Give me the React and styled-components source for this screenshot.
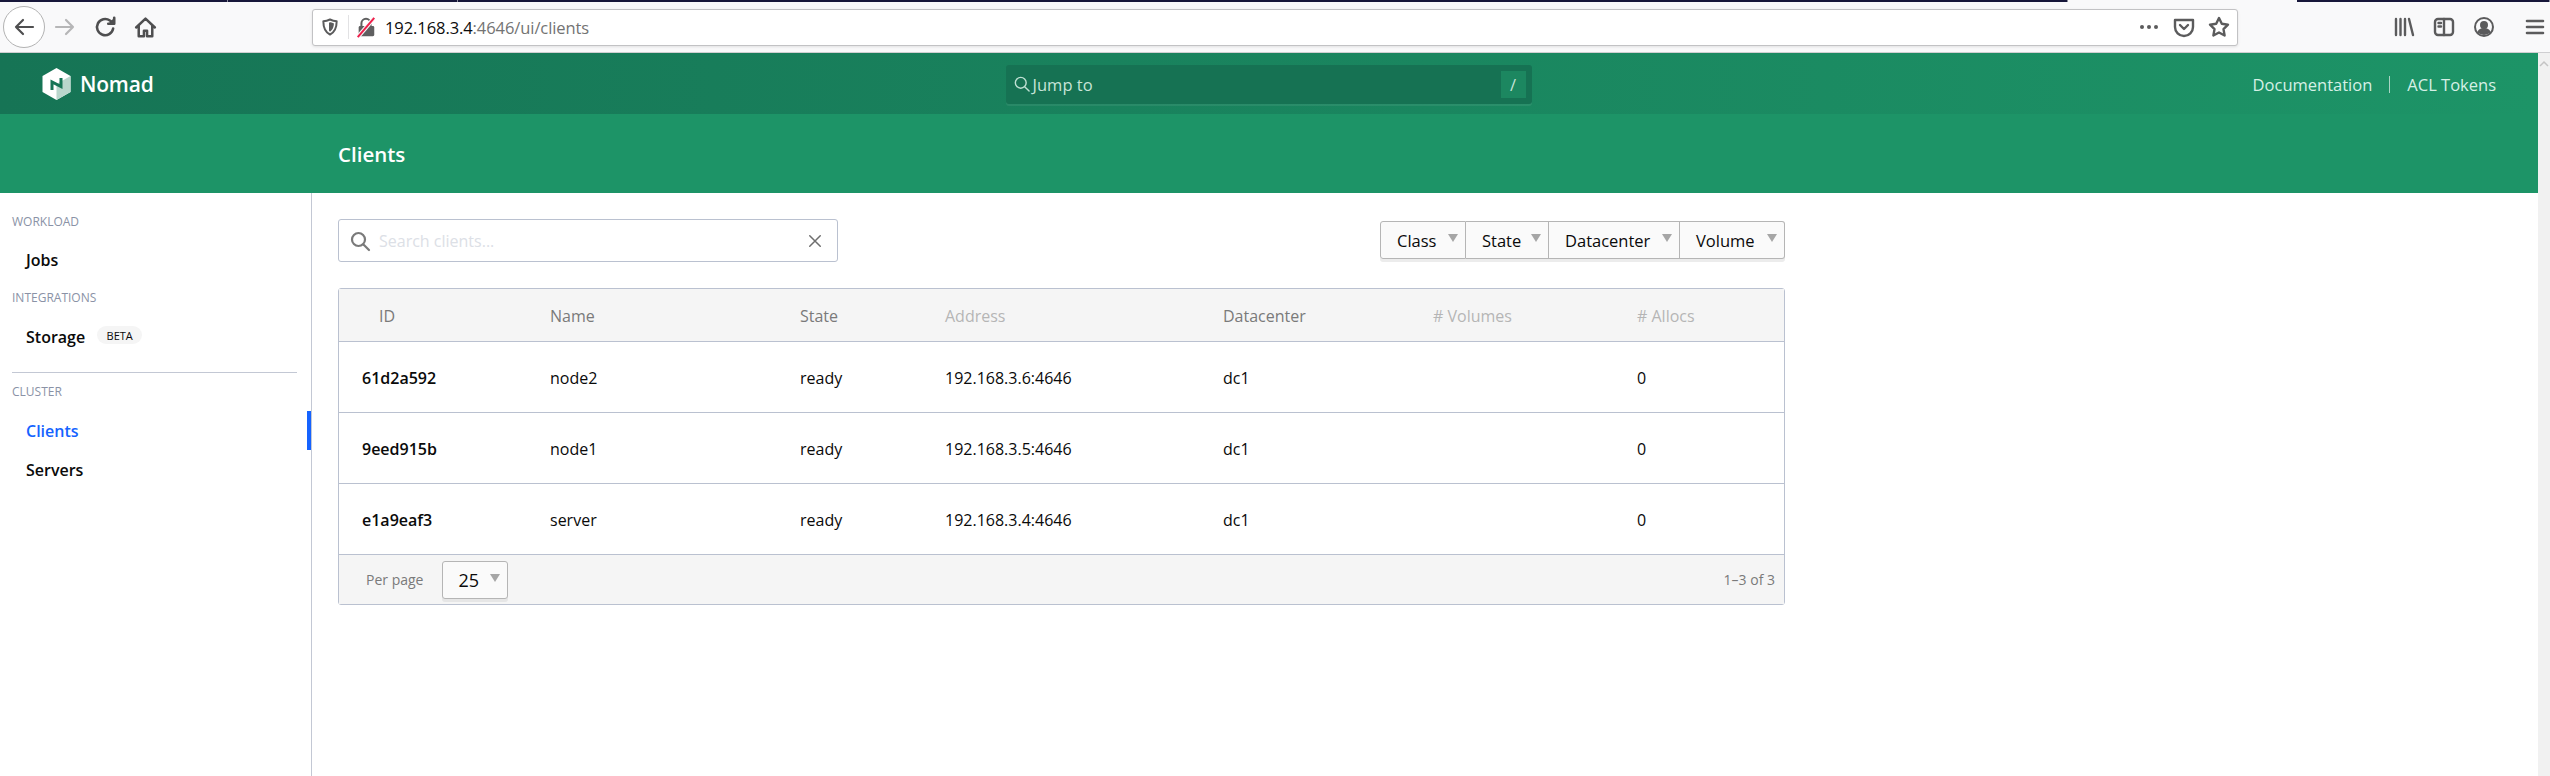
import styled, { createGlobalStyle } from 'styled-components';

const GlobalStyle = createGlobalStyle`
  html, body {
    margin: 0;
    height: 100%;
    overflow: hidden;
    background: #fff;
  }
  * {
    box-sizing: border-box;
  }
`;

const FONT = `"Open Sans", "Noto Sans", sans-serif`;

const COLUMNS = [
  { label: 'ID', width: 189, indent: 40 },
  { label: 'Name', width: 250 },
  { label: 'State', width: 145 },
  { label: 'Address', width: 278, muted: true },
  { label: 'Datacenter', width: 210 },
  { label: '# Volumes', width: 204, muted: true },
  { label: '# Allocs', width: 169, muted: true },
];

const CLIENTS = [
  { id: '61d2a592', name: 'node2', address: '192.168.3.6:4646' },
  { id: '9eed915b', name: 'node1', address: '192.168.3.5:4646' },
  { id: 'e1a9eaf3', name: 'server', address: '192.168.3.4:4646' },
];

const FILTERS = [
  { label: 'Class', width: 86 },
  { label: 'State', width: 83 },
  { label: 'Datacenter', width: 131 },
  { label: 'Volume', width: 105 },
];

const gridTemplate = COLUMNS.map((c) => `${c.width}px`).join(' ');

const Icon = ({ size = 24, w = 2, color = '#4f4f50', children }) => (
  <svg width={size} height={size} viewBox="0 0 24 24" fill="none" stroke={color} strokeWidth={w} strokeLinecap="round" strokeLinejoin="round">
    {children}
  </svg>
);

const NomadLogo = () => (
  <svg width="29" height="32" viewBox="0 0 28 32">
    <path d="M14 0 28 8v16l-14 8-14-8V8z" fill="#fff" />
    <path d="M14 16 28 8v16l-14 8z" fill="#b9d6cc" />
    <path d="M9.500 22v-8l9 4.500V10" fill="none" stroke="#167455" strokeWidth="3" />
  </svg>
);

const App = () => (
  <Page>
    <GlobalStyle />
    <TopStrip>
      <StripSegment $width={228} />
      <StripSegment $width={230} />
      <StripSegment $width={1610} />
      <StripGap />
      <StripSegment $width={253} />
    </TopStrip>
    <Toolbar>
      <BackButton>
        <Icon size={24} w={2.2}><path d="M21 12H4M11 5l-7 7 7 7" /></Icon>
      </BackButton>
      <ToolButton>
        <Icon size={24} w={2.2} color="#b6b6b7"><path d="M3 12h17M13 5l7 7-7 7" /></Icon>
      </ToolButton>
      <ToolButton>
        <Icon size={26} w={2.4}><path d="M19.500 13.500A7.500 7.500 0 1 1 16.500 6L20 8.500" /><path d="M20.500 3.500v5.500h-5.500" fill="#4f4f50" /></Icon>
      </ToolButton>
      <ToolButton>
        <Icon size={25} w={2.4}><path d="M3 12 12 3.500 21 12M5.500 10v10.500h5v-5.500h3v5.500h5V10" /></Icon>
      </ToolButton>
      <UrlBar>
        <UrlIcon>
          <Icon size={20} w={2.4} color="#5b5b5c"><path d="M12 3c3 1.500 5.500 2 8 2 0 8-2 13-8 16C6 18 4 13 4 5c2.500 0 5-.5 8-2z" /><path d="M12 7.500c1 .5 2 .7 3.500.8-.2 3.500-1.200 6-3.500 7.700z" fill="#5b5b5c" /></Icon>
        </UrlIcon>
        <UrlDivider />
        <UrlIcon>
          <svg width="24" height="24" viewBox="0 0 24 24">
            <path d="M7 11V8a5 5 0 0 1 10 0v3" fill="none" stroke="#5f5f60" strokeWidth="2.200" />
            <rect x="4" y="11" width="17" height="11" rx="1.500" fill="#5f5f60" />
            <path d="M3 23 21 2" stroke="#f9f9fa" strokeWidth="4.500" />
            <path d="M3 23 21 2" stroke="#ee1f4a" strokeWidth="2.200" />
          </svg>
        </UrlIcon>
        <UrlText>192.168.3.4<UrlMuted>:4646/ui/clients</UrlMuted></UrlText>
        <UrlActions>
          <UrlAction>
            <Icon size={24} w={0} color="#5b5b5c"><circle cx="5" cy="12" r="2" fill="#5b5b5c" /><circle cx="12" cy="12" r="2" fill="#5b5b5c" /><circle cx="19" cy="12" r="2" fill="#5b5b5c" /></Icon>
          </UrlAction>
          <UrlAction>
            <Icon size={24} w={2.4} color="#5b5b5c"><path d="M3 5h18v7a9 9 0 0 1-18 0z" /><path d="m8 10 4 4 4-4" /></Icon>
          </UrlAction>
          <UrlAction>
            <Icon size={24} w={2.4} color="#5b5b5c"><path d="m12 3 2.800 5.800 6.200.9-4.500 4.400 1.100 6.400L12 17.500 6.400 20.500l1.100-6.400L3 9.700l6.200-.9z" /></Icon>
          </UrlAction>
        </UrlActions>
      </UrlBar>
      <ToolButton $first>
        <Icon size={24} w={2.4} color="#5b5b5c"><path d="M4 4v16M8.500 4v16M13 4v16M17 4l4 16" /></Icon>
      </ToolButton>
      <ToolButton>
        <Icon size={24} w={2.4} color="#5b5b5c"><rect x="3" y="4" width="18" height="16" rx="3" /><path d="M12 4v16M6.500 8h2.500M6.500 11.500h2.500" /></Icon>
      </ToolButton>
      <ToolButton>
        <Icon size={24} w={2} color="#5b5b5c"><circle cx="12" cy="12" r="9" /><circle cx="12" cy="10" r="3" fill="#5b5b5c" /><path d="M6.500 17c1-2.500 3-3 5.500-3s4.500.5 5.500 3c-3 2.500-8 2.500-11 0z" fill="#5b5b5c" /></Icon>
      </ToolButton>
      <ToolDivider />
      <MenuButton>
        <Icon size={24} w={2.6} color="#5b5b5c"><path d="M4 6h16M4 12h16M4 18h16" /></Icon>
      </MenuButton>
    </Toolbar>
    <Viewport>
      <Content>
        <NavBar>
          <Brand>
            <NomadLogo />
            <BrandName>Nomad</BrandName>
          </Brand>
          <JumpBox>
            <JumpLabel>
              <Icon size={20} w={1.7} color="#bfe0d3"><circle cx="10.500" cy="10.500" r="6.500" /><path d="m15.500 15.500 5 5" /></Icon>
              Jump to
            </JumpLabel>
            <JumpKey>/</JumpKey>
          </JumpBox>
          <NavLinks>
            <NavLink>Documentation</NavLink>
            <NavSeparator />
            <NavLink>ACL Tokens</NavLink>
          </NavLinks>
        </NavBar>
        <SubNav>Clients</SubNav>
        <Body>
          <Sidebar>
            <MenuLabel>WORKLOAD</MenuLabel>
            <MenuItem>Jobs</MenuItem>
            <MenuLabel $top={11}>INTEGRATIONS</MenuLabel>
            <MenuItem $top={11}>
              Storage <BetaPill>BETA</BetaPill>
            </MenuItem>
            <MenuDivider />
            <MenuLabel $bottom={11}>CLUSTER</MenuLabel>
            <MenuItem $active>Clients</MenuItem>
            <MenuItem>Servers</MenuItem>
          </Sidebar>
          <Main>
            <Controls>
              <SearchBox>
                <Icon size={24} w={2.2} color="#7a7a7a"><circle cx="10.500" cy="10.500" r="6.500" /><path d="m15.500 15.500 5.500 5.500" /></Icon>
                <SearchPlaceholder>Search clients...</SearchPlaceholder>
                <Icon size={18} w={2} color="#6e6e6e"><path d="M5 5l14 14M19 5 5 19" /></Icon>
              </SearchBox>
              <FilterGroup>
                {FILTERS.map((f) => (
                  <FilterButton key={f.label} $width={f.width}>
                    {f.label}
                    <Caret />
                  </FilterButton>
                ))}
              </FilterGroup>
            </Controls>
            <Table>
              <HeaderRow>
                {COLUMNS.map((c) => (
                  <HeaderCell key={c.label} $muted={c.muted} $indent={c.indent}>{c.label}</HeaderCell>
                ))}
              </HeaderRow>
              {CLIENTS.map((client) => (
                <Row key={client.id}>
                  <IdCell>{client.id}</IdCell>
                  <Cell>{client.name}</Cell>
                  <Cell>ready</Cell>
                  <Cell>{client.address}</Cell>
                  <Cell>dc1</Cell>
                  <Cell />
                  <Cell>0</Cell>
                </Row>
              ))}
              <Footer>
                <PerPage>
                  Per page
                  <PageSelect>25<Caret /></PageSelect>
                </PerPage>
                <PageCount>1–3 of 3</PageCount>
              </Footer>
            </Table>
          </Main>
        </Body>
      </Content>
      <Scrollbar>
        <svg width="12" height="10" viewBox="0 0 12 10" fill="none" stroke="#c4c4c4" strokeWidth="1.500"><path d="m2 7 4-4 4 4" /></svg>
      </Scrollbar>
    </Viewport>
  </Page>
);

const Page = styled.div`
  display: flex;
  flex-direction: column;
  height: 776px;
  overflow: hidden;
  font-family: ${FONT};
  color: #0a0a0a;
`;

const TopStrip = styled.div`
  display: flex;
  height: 2px;
  background: #f9f9fa;
`;

const StripSegment = styled.div`
  width: ${({ $width }) => $width}px;
  background: #17173a;
  border-right: 1px solid #8d8d9c;
`;

const StripGap = styled.div`
  width: 229px;
`;

const Toolbar = styled.div`
  display: flex;
  align-items: center;
  height: 51px;
  padding-left: 3px;
  background: #f9f9fa;
  border-bottom: 1px solid #cfcfd1;
`;

const ToolButton = styled.div`
  display: flex;
  align-items: center;
  justify-content: center;
  flex: none;
  width: 40px;
  height: 40px;
  margin-left: ${({ $first }) => ($first ? '146px' : '0')};
`;

const BackButton = styled(ToolButton)`
  width: 42px;
  height: 42px;
  border: 1px solid #b3b3b3;
  border-radius: 50%;
  background: #fff;
`;

const MenuButton = styled(ToolButton)`
  margin-left: 7px;
`;

const ToolDivider = styled.div`
  width: 1px;
  height: 42px;
  margin-left: 4px;
  background: #d8d8da;
`;

const UrlBar = styled.div`
  display: flex;
  align-items: center;
  flex: none;
  width: 1926px;
  height: 37px;
  margin-left: 147px;
  padding-left: 6px;
  background: #fff;
  border: 1px solid #c2c2c4;
  border-radius: 3px;
  box-shadow: 0 1px 3px rgba(0, 0, 0, 0.1);
`;

const UrlIcon = styled.div`
  display: flex;
  align-items: center;
  justify-content: center;
  width: 22px;
  flex: none;
`;

const UrlDivider = styled.div`
  width: 1px;
  height: 24px;
  margin: 0 6px 0 7px;
  background: #e2e2e4;
`;

const UrlText = styled.div`
  margin-left: 8px;
  font-size: 16.5px;
  letter-spacing: -0.08px;
  color: #0c0c0d;
`;

const UrlMuted = styled.span`
  color: #737373;
`;

const UrlActions = styled.div`
  display: flex;
  align-items: center;
  gap: 10px;
  margin-left: auto;
  padding-right: 6px;
`;

const UrlAction = styled.div`
  display: flex;
  width: 25px;
  justify-content: center;
`;

const Viewport = styled.div`
  display: flex;
  flex: 1;
  min-height: 0;
`;

const Content = styled.div`
  display: flex;
  flex-direction: column;
  flex: 1;
  min-width: 0;
`;

const Scrollbar = styled.div`
  flex: none;
  width: 12px;
  padding-top: 6px;
  background: #f1f1f1;
  line-height: 0;
`;

const NavBar = styled.div`
  display: flex;
  align-items: center;
  flex: none;
  height: 61px;
  padding: 1px 42px 0;
  background: linear-gradient(to right, #167455, #1d9467);
  color: #fff;
`;

const Brand = styled.div`
  display: flex;
  align-items: center;
  gap: 9px;
`;

const BrandName = styled.span`
  font-size: 21px;
  font-weight: 600;
  letter-spacing: -0.2px;
`;

const JumpBox = styled.div`
  display: flex;
  align-items: center;
  justify-content: space-between;
  width: 526px;
  height: 39px;
  margin-left: 852px;
  padding: 0 6px;
  background: #167253;
  border-radius: 3px;
  box-shadow: 0 2px 0 rgba(255, 255, 255, 0.07);
  color: #c6e4d8;
  font-size: 16.5px;
`;

const JumpLabel = styled.div`
  display: flex;
  align-items: center;
  gap: 1px;
`;

const JumpKey = styled.div`
  display: flex;
  align-items: center;
  justify-content: center;
  width: 25px;
  height: 27px;
  background: #1c8760;
`;

const NavLinks = styled.div`
  display: flex;
  align-items: center;
  margin-left: auto;
  color: #d5f0e6;
  font-size: 16.5px;
`;

const NavLink = styled.span``;

const NavSeparator = styled.div`
  width: 1px;
  height: 17px;
  margin: 0 17px;
  background: #a9d5c4;
`;

const SubNav = styled.div`
  display: flex;
  align-items: center;
  flex: none;
  height: 79px;
  padding: 1px 0 0 338px;
  background: #1d9467;
  color: #fff;
  font-size: 20.5px;
  font-weight: 600;
`;

const Body = styled.div`
  display: flex;
  flex: 1;
  min-height: 0;
`;

const Sidebar = styled.div`
  flex: none;
  width: 312px;
  padding: 21px 14px 0 12px;
  border-right: 1px solid #c3c8d4;
`;

const MenuLabel = styled.div`
  margin-top: ${({ $top }) => $top || 0}px;
  margin-bottom: ${({ $bottom }) => $bottom ?? 10}px;
  color: #8a92a6;
  font-size: 12px;
  line-height: 16px;
`;

const MenuItem = styled.div`
  position: relative;
  display: flex;
  align-items: center;
  gap: 12px;
  height: 39px;
  margin-top: ${({ $top }) => $top || 0}px;
  padding: 1px 0 0 14px;
  color: ${({ $active }) => ($active ? '#1563ff' : '#0a0a0a')};
  font-size: 16px;
  font-weight: 600;

  ${({ $active }) =>
    $active &&
    `
    &::after {
      content: '';
      position: absolute;
      top: 0;
      bottom: 0;
      right: -14px;
      width: 4px;
      background: #1563ff;
    }
  `}
`;

const BetaPill = styled.span`
  display: inline-flex;
  align-items: center;
  justify-content: center;
  width: 45px;
  height: 18px;
  margin-top: -4px;
  border-radius: 9px;
  background: #f5f5f5;
  font-size: 11px;
  font-weight: 400;
`;

const MenuDivider = styled.div`
  height: 1px;
  margin: 16px 0 11px;
  background: #c3c8d4;
`;

const Main = styled.div`
  flex: none;
  width: 1473px;
  padding: 26px 0 0 26px;
`;

const Controls = styled.div`
  display: flex;
  align-items: flex-start;
  justify-content: space-between;
  height: 43px;
  margin-bottom: 26px;
`;

const SearchBox = styled.div`
  display: flex;
  align-items: center;
  width: 500px;
  height: 43px;
  padding: 0 13px 0 9px;
  border: 1px solid #bac1d0;
  border-radius: 3px;
`;

const SearchPlaceholder = styled.span`
  flex: 1;
  margin-left: 7px;
  color: #dce0e6;
  font-size: 16px;
`;

const FilterGroup = styled.div`
  display: flex;
  margin-top: 2px;
  border-radius: 3px;
  box-shadow: 0 3px 0 #ececec;
`;

const FilterButton = styled.div`
  display: flex;
  align-items: center;
  justify-content: space-between;
  width: ${({ $width }) => $width}px;
  height: 38px;
  padding: 0 7px 0 16px;
  background: #fafafa;
  border: 1px solid #b5b5b5;
  border-left-width: 0;
  font-size: 16.5px;

  &:first-child {
    border-left-width: 1px;
    border-radius: 3px 0 0 3px;
  }
  &:last-child {
    border-radius: 0 3px 3px 0;
  }
`;

const Caret = styled.span`
  flex: none;
  margin-top: -4px;
  border-style: solid;
  border-width: 8px 5px 0;
  border-color: #a6a6a6 transparent transparent;
`;

const Table = styled.div`
  width: 1447px;
  border: 1px solid #bac1d0;
  border-radius: 3px;
  font-size: 16px;
`;

const HeaderRow = styled.div`
  display: grid;
  grid-template-columns: ${gridTemplate};
  align-items: center;
  height: 53px;
  padding-top: 2px;
  background: #f5f5f5;
  border-bottom: 1px solid #bac1d0;
`;

const HeaderCell = styled.div`
  padding-left: ${({ $indent }) => $indent || 22}px;
  color: ${({ $muted }) => ($muted ? '#b5b5b5' : '#7a7a7a')};
`;

const Row = styled.div`
  display: grid;
  grid-template-columns: ${gridTemplate};
  align-items: center;
  height: 71px;
  padding-top: 2px;
  border-bottom: 1px solid #bac1d0;
`;

const Cell = styled.div`
  padding-left: 22px;
`;

const IdCell = styled(Cell)`
  padding-left: 23px;
  font-weight: 600;
`;

const Footer = styled.div`
  display: flex;
  align-items: center;
  justify-content: space-between;
  height: 49px;
  padding: 0 9px 0 27px;
  background: #f5f5f5;
  font-size: 14px;
  color: #7a7a7a;
`;

const PerPage = styled.div`
  display: flex;
  align-items: center;
  gap: 19px;
`;

const PageSelect = styled.div`
  display: flex;
  align-items: center;
  justify-content: space-between;
  width: 66px;
  height: 38px;
  padding: 0 7px 0 15px;
  background: #fafafa;
  border: 1px solid #b5b5b5;
  border-radius: 3px;
  box-shadow: 0 3px 0 #e6e6e6;
  color: #0a0a0a;
  font-size: 18px;
`;

const PageCount = styled.div``;

export default App;
